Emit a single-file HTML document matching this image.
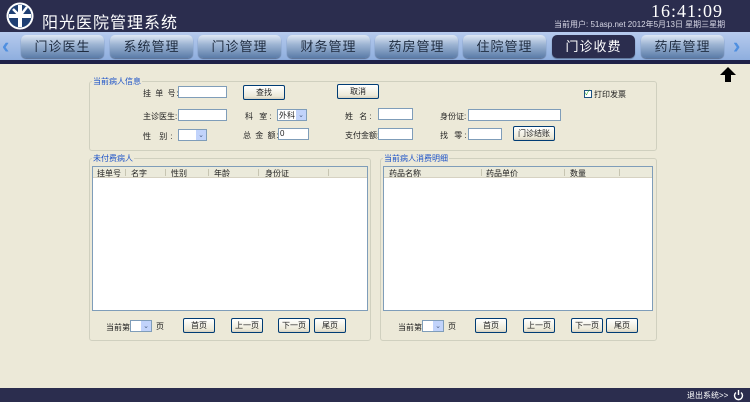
<!DOCTYPE html>
<html><head><meta charset="utf-8"><style>
*{margin:0;padding:0;box-sizing:border-box}
body{width:750px;height:402px;overflow:hidden;background:#ece9d8;position:relative;font-family:"Liberation Sans","Noto Sans CJK SC",sans-serif;font-size:8px;color:#222}
.a{position:absolute}
.hd{left:0;top:0;width:750px;height:32px;background:#2b2d4e}
.nav{left:0;top:32px;width:750px;height:28px;background:linear-gradient(#b7cbee,#8eaede)}
.ln{left:0;top:60px;width:750px;height:4px;background:#1f2148}
.ft{left:0;top:388px;width:750px;height:14px;background:#2b2d4e}
.tab{position:absolute;top:35px;height:23px;width:83px;border-radius:5px;background:linear-gradient(#dfe8f4 0%,#9fb6d4 40%,#5b7ca8 100%);color:#1f2c40;font-size:13px;text-align:center;line-height:23px;letter-spacing:1px;box-shadow:0 1px 1px #5a6e90}
.tab.on{background:#2b2d4e;color:#fff}
.fs{position:absolute;border:1px solid #d0d0bf;border-radius:3px}
.lg{position:absolute;color:#1c52c8;background:#ece9d8;padding:0 1px;font-size:8px}
.in{position:absolute;background:#fff;border:1px solid #7f9db9;height:12px}
.bt{position:absolute;border:1px solid #003c74;border-radius:2px;background:linear-gradient(#fff,#ece9d8 80%,#d6d0c0);text-align:center;font-size:8px;line-height:13px;height:15px}
.sel{position:absolute;background:#fff;border:1px solid #7f9db9;height:12px}
.sel:after{content:"";position:absolute;right:0;top:0;width:10px;height:10px;background:#c1d3fb}
.sel i{position:absolute;right:2px;top:1px;font-style:normal;font-size:7px;color:#4d6185;z-index:1}
.t{position:absolute;font-size:8px;white-space:nowrap}
.tb{position:absolute;background:#fff;border:1px solid #7f9db9}
.th{position:absolute;left:0;top:0;right:0;height:11px;background:#ebeadb;border-bottom:1px solid #d6d2c2}
.th span{position:absolute;top:1px;font-size:8px}
.th b{position:absolute;top:2px;width:1px;height:7px;background:#c7c5b2}
</style></head><body>
<div class="a hd"></div>
<svg class="a" style="left:6px;top:2px" width="28" height="28" viewBox="0 0 28 28"><circle cx="14" cy="14" r="13.5" fill="#fff"/><circle cx="14" cy="14" r="11.5" fill="#1f3f73"/><path d="M3 14h22M14 3v22" stroke="#fff" stroke-width="4"/><path d="M7 7l7 7 7-9" stroke="#fff" stroke-width="2.5" fill="none"/></svg>
<div class="t" style="left:42px;top:9px;font-size:16px;color:#fff;letter-spacing:1px">阳光医院管理系统</div>
<div class="t" style="left:651px;top:1px;font-family:'Liberation Serif',serif;font-size:18px;color:#fff;letter-spacing:1px">16:41:09</div>
<div class="t" style="left:554px;top:19px;color:#d8d8e6">当前用户: 51asp.net 2012年5月13日 星期三星期</div>
<div class="a nav"></div>
<div class="t" style="left:2px;top:33px;font-size:22px;color:#4f8fe0;font-weight:bold">‹</div>
<div class="t" style="left:733px;top:33px;font-size:22px;color:#4f8fe0;font-weight:bold">›</div>
<div class="tab" style="left:21px">门诊医生</div>
<div class="tab" style="left:110px">系统管理</div>
<div class="tab" style="left:198px">门诊管理</div>
<div class="tab" style="left:287px">财务管理</div>
<div class="tab" style="left:375px">药房管理</div>
<div class="tab" style="left:463px">住院管理</div>
<div class="tab on" style="left:552px">门诊收费</div>
<div class="tab" style="left:641px">药库管理</div>
<div class="a ln"></div>
<svg class="a" style="left:719px;top:66px" width="18" height="16" viewBox="0 0 18 16"><path d="M9 1L1 9h5v7h6V9h5z" fill="#000"/></svg>

<div class="fs" style="left:89px;top:81px;width:568px;height:70px"></div>
<div class="lg" style="left:92px;top:76px">当前病人信息</div>
<div class="t" style="left:143px;top:88px;letter-spacing:1px">挂 单 号:</div>
<div class="in" style="left:178px;top:86px;width:49px"></div>
<div class="bt" style="left:243px;top:85px;width:42px">查找</div>
<div class="bt" style="left:337px;top:84px;width:42px">取消</div>
<div class="a" style="left:584px;top:90px;width:8px;height:8px;border:1px solid #1c5180;background:#fff;font-size:7px;line-height:6px;color:#21a121">✓</div>
<div class="t" style="left:594px;top:89px">打印发票</div>
<div class="t" style="left:143px;top:111px">主诊医生:</div>
<div class="in" style="left:178px;top:109px;width:49px"></div>
<div class="t" style="left:245px;top:111px;letter-spacing:2px">科 室:</div>
<div class="sel" style="left:277px;top:109px;width:30px"><span style="position:absolute;left:1px;top:0">外科</span><i>⌄</i></div>
<div class="t" style="left:345px;top:111px;letter-spacing:2px">姓 名:</div>
<div class="in" style="left:378px;top:108px;width:35px"></div>
<div class="t" style="left:440px;top:111px">身份证:</div>
<div class="in" style="left:468px;top:109px;width:93px"></div>
<div class="t" style="left:143px;top:131px;letter-spacing:3px">性 别:</div>
<div class="sel" style="left:178px;top:129px;width:29px"><i>⌄</i></div>
<div class="t" style="left:243px;top:130px;letter-spacing:1px">总 金 额:</div>
<div class="in" style="left:278px;top:128px;width:31px"><span style="position:absolute;left:1px;top:0">0</span></div>
<div class="t" style="left:345px;top:130px">支付金额:</div>
<div class="in" style="left:378px;top:128px;width:35px"></div>
<div class="t" style="left:440px;top:130px;letter-spacing:2px">找 零:</div>
<div class="in" style="left:468px;top:128px;width:34px"></div>
<div class="bt" style="left:513px;top:126px;width:42px">门诊结账</div>

<div class="fs" style="left:89px;top:158px;width:282px;height:183px"></div>
<div class="lg" style="left:92px;top:153px">未付费病人</div>
<div class="tb" style="left:92px;top:166px;width:276px;height:145px"><div class="th">
<span style="left:4px">挂单号</span><b style="left:32px"></b><span style="left:38px">名字</span><b style="left:72px"></b><span style="left:78px">性别</span><b style="left:115px"></b><span style="left:121px">年龄</span><b style="left:165px"></b><span style="left:172px">身份证</span><b style="left:235px"></b></div></div>
<div class="t" style="left:106px;top:322px">当前第</div>
<div class="sel" style="left:130px;top:320px;width:22px"><i>⌄</i></div>
<div class="t" style="left:156px;top:321px">页</div>
<div class="bt" style="left:183px;top:318px;width:32px">首页</div>
<div class="bt" style="left:231px;top:318px;width:32px">上一页</div>
<div class="bt" style="left:278px;top:318px;width:32px">下一页</div>
<div class="bt" style="left:314px;top:318px;width:32px">尾页</div>

<div class="fs" style="left:380px;top:158px;width:277px;height:183px"></div>
<div class="lg" style="left:383px;top:153px">当前病人消费明细</div>
<div class="tb" style="left:383px;top:166px;width:270px;height:145px"><div class="th">
<span style="left:5px">药品名称</span><b style="left:97px"></b><span style="left:102px">药品单价</span><b style="left:180px"></b><span style="left:186px">数量</span><b style="left:235px"></b></div></div>
<div class="t" style="left:398px;top:322px">当前第</div>
<div class="sel" style="left:422px;top:320px;width:22px"><i>⌄</i></div>
<div class="t" style="left:448px;top:321px">页</div>
<div class="bt" style="left:475px;top:318px;width:32px">首页</div>
<div class="bt" style="left:523px;top:318px;width:32px">上一页</div>
<div class="bt" style="left:571px;top:318px;width:32px">下一页</div>
<div class="bt" style="left:606px;top:318px;width:32px">尾页</div>

<div class="a ft"></div>
<div class="t" style="left:687px;top:390px;color:#fff">退出系统&gt;&gt;</div>
<svg class="a" style="left:733px;top:389px" width="11" height="12" viewBox="0 0 11 12"><path d="M3 3.5A4 4 0 1 0 8 3.5M5.5 1v5" stroke="#fff" stroke-width="1.4" fill="none"/></svg>
</body></html>
